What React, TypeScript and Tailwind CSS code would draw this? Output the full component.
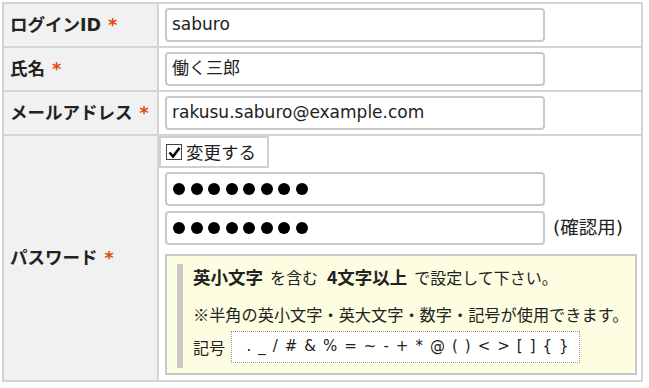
import React from 'react';

const latin = { fontFamily: '"DejaVu Sans", "Noto Sans CJK JP", sans-serif' };
const jp = { fontFamily: '"Noto Sans CJK JP", sans-serif' };

const symbols = ['.', '_', '/', '#', '&', '%', '=', '~', '-', '+', '*', '@', '(', ')', '<', '>', '[', ']', '{', '}'];

function Req() {
  return <span className="ml-[7px] text-[#e0480e]">*</span>;
}

function Label({ children }: { children: React.ReactNode }) {
  return (
    <td className="w-[155px] border-2 border-[#d4d4d4] bg-[#f1f1f1] pl-[6px] align-middle text-[17.5px] font-bold text-[#222]" style={latin}>
      <span className="whitespace-nowrap">{children}<Req /></span>
    </td>
  );
}

function Field({ value }: { value: string }) {
  return (
    <div className="flex h-[34px] w-[380px] items-center rounded-[4px] border-2 border-[#c9c9c9] bg-white pl-[5px] text-[17px] text-[#222]" style={latin}>
      {value}
    </div>
  );
}

function Dots() {
  return (
    <div className="flex h-[34px] w-[380px] items-center gap-[5.5px] rounded-[4px] border-2 border-[#c9c9c9] bg-white pl-[6px]">
      {Array.from({ length: 8 }).map((_, i) => (
        <span key={i} className="h-[12px] w-[12px] rounded-full bg-black" />
      ))}
    </div>
  );
}

export default function App() {
  return (
    <div className="h-[388px] w-[649px] bg-white pl-[2px] pt-[2px]">
      <table className="w-[641px] border-2 border-[#d4d4d4]">
        <tbody>
          <tr>
            <Label>ログインID</Label>
            <td className="border-2 border-[#d4d4d4] py-[4px] pl-[6px]"><Field value="saburo" /></td>
          </tr>
          <tr>
            <Label>氏名</Label>
            <td className="border-2 border-[#d4d4d4] py-[4px] pl-[6px]"><Field value="働く三郎" /></td>
          </tr>
          <tr>
            <Label>メールアドレス</Label>
            <td className="border-2 border-[#d4d4d4] py-[4px] pl-[6px]"><Field value="rakusu.saburo@example.com" /></td>
          </tr>
          <tr>
            <Label>パスワード</Label>
            <td className="border-2 border-[#d4d4d4] pb-[5px] pl-[6px] pr-[4px]">
              <div className="ml-[-6px] flex h-[32px] w-[110px] items-center gap-[4px] border-2 border-[#cfcfcf] pl-[5px] text-[17.5px] text-[#222]" style={jp}>
                <span className="flex h-[16px] w-[16px] items-center justify-center border border-[#444] bg-white">
                  <svg width="13" height="13" viewBox="0 0 13 13">
                    <path d="M1.5 6.5 L5 10.5 L11.5 2" fill="none" stroke="#000" strokeWidth="2.6" />
                  </svg>
                </span>
                変更する
              </div>
              <div className="mt-[4px]"><Dots /></div>
              <div className="mt-[5px] flex items-center">
                <Dots />
                <span className="ml-[8px] text-[18.5px] text-[#222]" style={latin}>(確認用)</span>
              </div>
              <div className="mt-[9px] flex h-[121px] border-2 border-[#c8c8c8] bg-[#fdfde1] pb-[5px] pl-[10px] pt-[8px]">
                <div className="w-[6px] bg-[#c8c8c8]" />
                <div className="flex flex-col pl-[10px] text-[#222]" style={jp}>
                  <div className="flex items-baseline text-[16px]">
                    <b className="text-[17.5px]">英小文字</b>
                    <span className="ml-[7px]">を含む</span>
                    <b className="ml-[9px] text-[17.5px]">4文字以上</b>
                    <span className="ml-[7px]">で設定して下さい。</span>
                  </div>
                  <div className="mt-[12px] text-[16.2px]">※半角の英小文字・英大文字・数字・記号が使用できます。</div>
                  <div className="mt-[4px] flex items-center text-[16px]">
                    <span>記号</span>
                    <div className="ml-[6px] flex h-[32px] w-[349px] items-center justify-center gap-[7px] border border-dotted border-[#999] bg-white pl-[4px] text-[15px]" style={latin}>
                      {symbols.map((s, i) => (
                        <span key={i}>{s}</span>
                      ))}
                    </div>
                  </div>
                </div>
              </div>
            </td>
          </tr>
        </tbody>
      </table>
    </div>
  );
}
